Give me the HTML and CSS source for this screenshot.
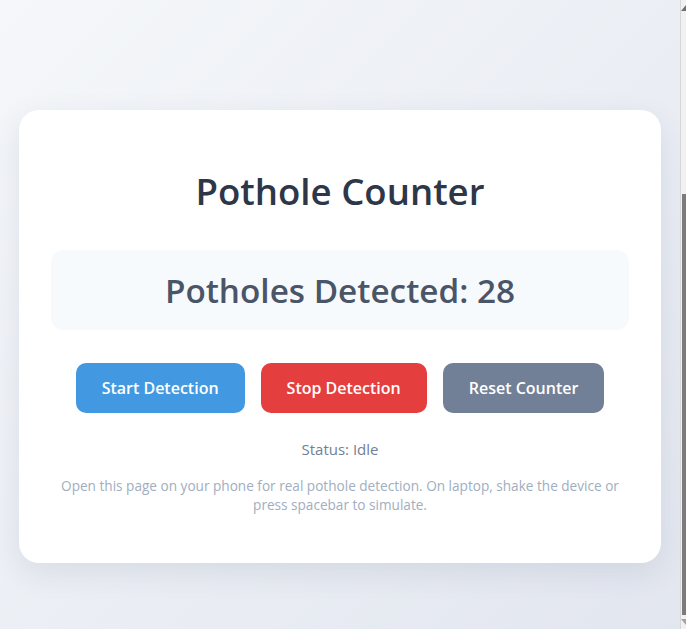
FILE: index.html
```html
<!DOCTYPE html>
<html lang="en">
<head>
<meta charset="utf-8">
<title>Pothole Counter</title>
<link rel="stylesheet" href="styles.css">
</head>
<body>
<main class="page">
  <section class="card">
    <h1 class="title">Pothole Counter</h1>
    <div class="counter-box">
      <p class="counter">Potholes Detected: 28</p>
    </div>
    <div class="actions">
      <button class="btn btn-start">Start Detection</button>
      <button class="btn btn-stop">Stop Detection</button>
      <button class="btn btn-reset">Reset Counter</button>
    </div>
    <p class="status">Status: Idle</p>
    <p class="info">Open this page on your phone for real pothole detection. On laptop, shake the device or press spacebar to simulate.</p>
  </section>
</main>
<div class="scrollbar" aria-hidden="true">
  <span class="arrow arrow-up"></span>
  <span class="thumb"></span>
  <span class="arrow arrow-down"></span>
</div>
</body>
</html>
```

FILE: styles.css
```css
* { box-sizing: border-box; }
html, body { margin: 0; padding: 0; }
body {
  font-family: "Open Sans", "Noto Sans", sans-serif;
  background: linear-gradient(135deg, #f5f7fa 0%, #e2e6ef 100%);
  min-height: 100vh;
  overflow: hidden;
}
.page {
  margin-right: 6px;
  padding: 110px 19px 67px;
  display: flex;
  justify-content: center;
}
.card {
  width: 100%;
  background: #ffffff;
  border-radius: 20px;
  padding: 40px 32px 49px;
  box-shadow: 0 10px 30px rgba(40, 55, 90, 0.10);
  text-align: center;
}
.title {
  margin: 20px 0 37px;
  font-size: 36.6px;
  line-height: 43px;
  font-weight: 600;
  color: #2d3748;
}
.counter-box {
  background: #f7fafc;
  border-radius: 12px;
  padding: 20px;
}
.counter {
  margin: 0;
  font-size: 33.3px;
  line-height: 40px;
  font-weight: 600;
  color: #4a5568;
}
.actions {
  margin-top: 33px;
  display: flex;
  justify-content: center;
  gap: 16px;
}
.btn {
  font-family: inherit;
  height: 50px;
  border: none;
  border-radius: 10px;
  color: #ffffff;
  font-size: 16px;
  font-weight: 600;
  padding: 0 26px;
}
.btn-start { background: #4299e1; }
.btn-stop { background: #e53e3e; }
.btn-reset { background: #718096; }
.status {
  margin: 25px 0 0;
  font-size: 15px;
  line-height: 22px;
  color: #718096;
}
.info {
  margin: 16px 0 0;
  font-size: 13.6px;
  line-height: 19px;
  color: #a0aec0;
}
.scrollbar {
  position: fixed;
  top: 0;
  right: 0;
  width: 6px;
  height: 100%;
  background: #f1f1f1;
  border-left: 1px solid #d6d6d6;
}
.thumb {
  position: absolute;
  top: 194px;
  bottom: 14px;
  left: 1px;
  right: 0;
  background: #7b7b7b;
}
.arrow {
  position: absolute;
  left: 0;
  width: 0;
  height: 0;
  border-left: 5px solid transparent;
}
.arrow-up { top: 5px; border-bottom: 6px solid #6e6e6e; }
.arrow-down { bottom: 4px; border-top: 6px solid #a3a3a3; }
```
